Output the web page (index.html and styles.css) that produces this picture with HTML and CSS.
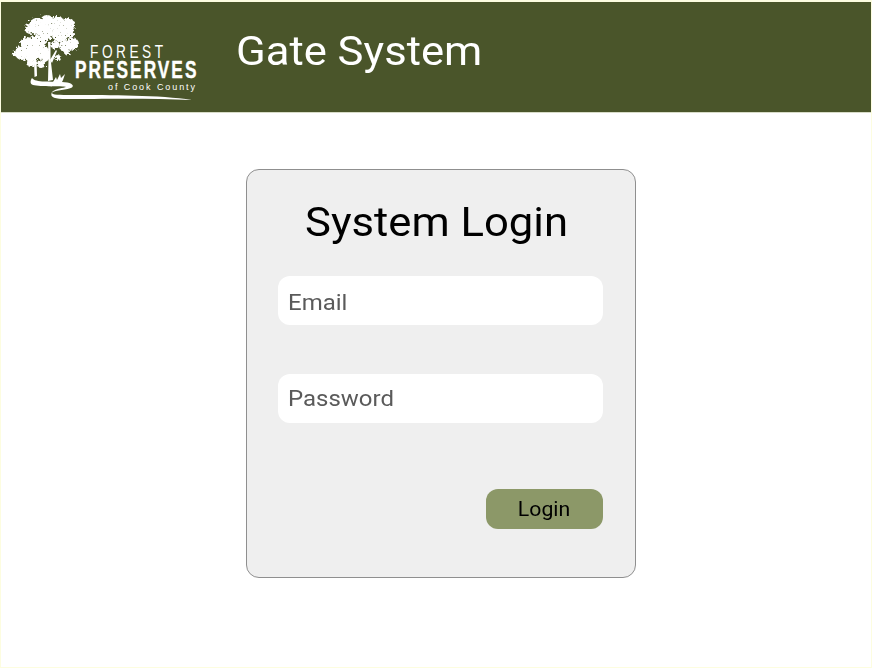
FILE: index.html
```html
<!DOCTYPE html>
<html lang="en">
<head>
<meta charset="utf-8">
<title>Gate System</title>
<link rel="stylesheet" href="styles.css">
</head>
<body>
<div class="page">
  <header class="header">
    <svg class="logo" viewBox="0 0 200 110" width="200" height="110" aria-label="Forest Preserves of Cook County">
      <defs>
        <filter id="leafy" x="-15%" y="-15%" width="130%" height="130%" color-interpolation-filters="sRGB">
          <feTurbulence type="fractalNoise" baseFrequency="0.5" numOctaves="2" seed="7" result="n"/>
          <feDisplacementMap in="SourceGraphic" in2="n" scale="6" result="shape"/>
          <feTurbulence type="fractalNoise" baseFrequency="0.6" numOctaves="2" seed="11"/>
          <feColorMatrix type="matrix" values="0 0 0 0 0  0 0 0 0 0  0 0 0 0 0  7 0 0 0 -5" result="holes"/>
          <feComposite in="shape" in2="holes" operator="out"/>
          <feGaussianBlur stdDeviation="0.5"/>
        </filter>
      </defs>
      <g class="crown" filter="url(#leafy)">
        <circle cx="30" cy="29" r="5"/>
        <circle cx="37" cy="26" r="8"/>
        <circle cx="47" cy="22" r="7"/>
        <circle cx="57" cy="24" r="8"/>
        <circle cx="68" cy="25" r="7"/>
        <circle cx="45" cy="33" r="8"/>
        <circle cx="60" cy="34" r="8"/>
        <circle cx="70" cy="34" r="4"/>
        <circle cx="73" cy="44" r="6"/>
        <circle cx="65" cy="46" r="6"/>
        <circle cx="67" cy="52" r="3"/>
        <circle cx="27" cy="44" r="7"/>
        <circle cx="38" cy="43" r="8"/>
        <circle cx="22" cy="53" r="7"/>
        <circle cx="32" cy="54" r="8"/>
        <circle cx="43" cy="53" r="7"/>
        <circle cx="55" cy="45" r="4"/>
        <circle cx="58" cy="58" r="3"/>
        <circle cx="31" cy="63" r="4"/>
        <circle cx="41" cy="64" r="4"/>
        <circle cx="15" cy="54" r="2.500"/>
      </g>
      <path class="ground" d="M34 60 L36.500 60 L37 76 L34.500 77 Z"/>
      <path class="ground" d="M48 42 L50.500 42 L50.500 58 L53 80 L48 81 L48.500 60 Z"/>
      <path class="ground" d="M50 60 L56 50 L57 51 L52 63 Z"/>
      <path class="ground" d="M42 60 L48 56 L48.500 60 L44 63 Z"/>
      <path class="ground" d="M53 82 l3 -5 l1 3 l3 -6 l1 4 l4 -4 l-2 6 l-1 2 Z"/>
      <path class="ground" d="M32 78 C35 83 52 81 62 82 C70 82 75 85 72 87.500 C68 90 55 90 52 92.500 C51 95 60 95 72 95 C110 95 160 95 192 100 C150 98 100 99 66 99 C56 99 49 98 52 92 C56 88 64 88 66 87 C64 86 40 87 33 85 C30 84 30 81 32 78 Z"/>
      <text class="logo-forest" transform="translate(90 58) scale(.72 1)">FOREST</text>
      <text class="logo-preserves" transform="translate(75 78) scale(.72 1)">PRESERVES</text>
      <text class="logo-county" x="108" y="90" textLength="87" lengthAdjust="spacing">of Cook County</text>
    </svg>
    <h1 class="app-title"><span class="wide">Gate System</span></h1>
  </header>
  <main class="main">
    <form class="card">
      <h2 class="card-title"><span class="wide">System Login</span></h2>
      <div class="field field-email"><span class="wide">Email</span></div>
      <div class="field field-password"><span class="wide">Password</span></div>
      <div class="actions">
        <button class="login" type="button"><span class="wide-center">Login</span></button>
      </div>
    </form>
  </main>
</div>
</body>
</html>
```
FILE: styles.css
```css
* { box-sizing: border-box; }
html, body { margin: 0; padding: 0; background: #fff; }
.page {
  width: 872px;
  height: 668px;
  border: 1px solid #fdfde0;
  border-top-width: 2px;
  font-family: Roboto, sans-serif;
}
.wide, .wide-center {
  display: inline-block;
  transform: scaleX(1.09);
  transform-origin: left center;
}
.wide-center { transform-origin: center; }
.header {
  display: flex;
  align-items: flex-start;
  height: 110px;
  background: #4a552a;
  color: #fff;
  box-shadow: 0 1px 0 #d8dcc8;
}
.logo { flex: none; margin: -2px 0 0 -1px; display: block; }
.crown circle, .ground { fill: #fff; }
.logo-forest { font: 400 19px "Liberation Sans", sans-serif; letter-spacing: 4.900px; fill: #fff; }
.logo-preserves { font: 700 24px "Liberation Sans", sans-serif; letter-spacing: 2.800px; stroke: #fff; stroke-width: 0.400px; fill: #fff; }
.logo-county { font: 400 9px "Liberation Sans", sans-serif; fill: #fff; }
.app-title {
  margin: 28px 0 0 36px;
  font-size: 40px;
  font-weight: 400;
  line-height: 44px;
}
.main {
  display: flex;
  justify-content: center;
  padding: 57px 0 0 10px;
}
.card {
  width: 390px;
  height: 409px;
  background: #efefef;
  border: 1px solid #8f8f8f;
  border-radius: 13px;
  padding: 28px 32px 0 31px;
}
.card-title {
  margin: 0;
  padding-left: 27px;
  font-size: 40px;
  font-weight: 400;
  line-height: 50px;
  color: #000;
}
.field {
  height: 49px;
  background: #fff;
  border-radius: 12px;
  padding-left: 10px;
  font-size: 22px;
  color: #5a5a5a;
  display: flex;
  align-items: center;
}
.field-email { margin-top: 28px; padding-top: 3px; }
.field-password { margin-top: 49px; }
.actions {
  display: flex;
  justify-content: flex-end;
  margin-top: 66px;
}
.login {
  width: 117px;
  height: 40px;
  border: 0;
  border-radius: 12px;
  background: #8c9868;
  color: #000;
  font-family: Roboto, sans-serif;
  font-size: 19.500px;
  padding: 0;
}
```
